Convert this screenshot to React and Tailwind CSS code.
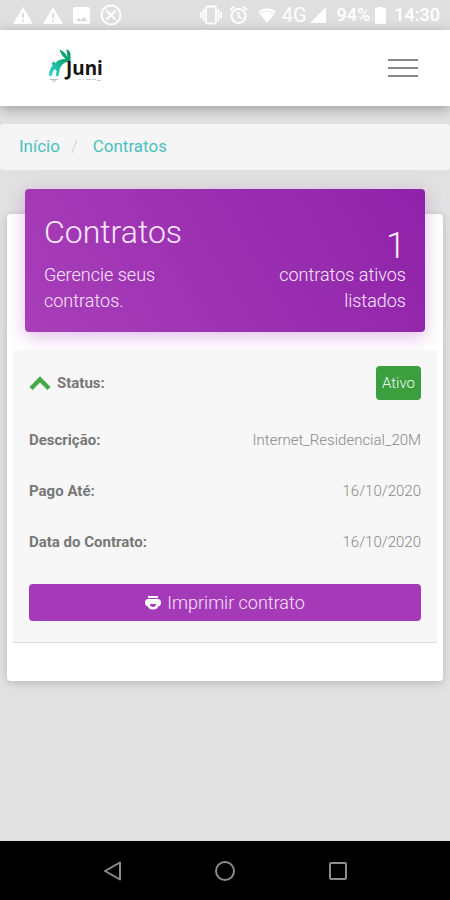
import React from "react";

function Warning() {
  return (
    <svg width="20" height="18" viewBox="0 0 20 18" aria-hidden="true">
      <path d="M10 1 L20 18 H0 Z" fill="#fff" />
      <path d="M10 7v5M10 13.5v2" stroke="#dcdcdc" strokeWidth="1.8" />
    </svg>
  );
}

function StatusBar() {
  return (
    <div className="flex h-[30px] shrink-0 items-center justify-between bg-[#dfdfdf] pr-[10px] pl-[13px] text-white">
      <div className="flex items-center gap-[10px]">
        <Warning />
        <Warning />
        <svg width="17" height="17" viewBox="0 0 17 17" aria-hidden="true">
          <rect width="17" height="17" rx="2" fill="#fff" />
          <path d="M3 14l3-3 2 2 3-3 3 4z" fill="#d6d6d6" />
        </svg>
        <svg width="22" height="22" viewBox="0 0 22 22" fill="none" stroke="#fff" strokeWidth="2" aria-hidden="true">
          <circle cx="11" cy="11" r="9.5" />
          <path d="M6.500 6.500l9 9M15.500 6.500l-9 9" />
        </svg>
      </div>
      <div className="flex items-center text-[18px] leading-none font-medium">
        <svg className="mr-[7px]" width="22" height="20" viewBox="0 0 22 20" fill="none" stroke="#fff" strokeWidth="1.800" aria-hidden="true">
          <rect x="6" y="1.500" width="10" height="17" rx="1.500" />
          <path d="M3.500 4v12M18.500 4v12M1 7v6M21 7v6" />
        </svg>
        <svg className="mr-[10px]" width="19" height="20" viewBox="0 0 19 20" fill="none" stroke="#fff" strokeWidth="2" aria-hidden="true">
          <circle cx="9.500" cy="11" r="7" />
          <path d="M9.500 7v4.500l3 2M1 5l4-3.500M18 5l-4-3.500" />
        </svg>
        <svg className="mr-[6px]" width="18" height="15" viewBox="0 0 18 15" aria-hidden="true">
          <path d="M0 3.500Q9-3 18 3.500L9 15z" fill="#fff" />
          <path d="M1.500 5.500Q9 1 16.500 5.500" stroke="#e6e6e6" fill="none" />
        </svg>
        <span className="text-[20px] font-normal">4G</span>
        <svg className="mr-[11px] ml-[3px]" width="16" height="16" viewBox="0 0 16 16" aria-hidden="true">
          <path d="M0 16L16 0v16z" fill="#fff" />
        </svg>
        <span>94%</span>
        <svg className="mr-[8px] ml-[5px]" width="11" height="17" viewBox="0 0 11 17" aria-hidden="true">
          <path d="M3 0h5v1h3v16H0V1h3z" fill="#fff" />
        </svg>
        <span>14:30</span>
      </div>
    </div>
  );
}

function Logo() {
  return (
    <svg width="56" height="36" viewBox="0 0 56 36" role="img" aria-label="Juni">
      <defs>
        <linearGradient id="juniLeaf" x1="1" y1="0" x2="0" y2="1">
          <stop offset="0" stopColor="#05944f" />
          <stop offset="0.500" stopColor="#17b08c" />
          <stop offset="1" stopColor="#35dcd0" />
        </linearGradient>
      </defs>
      <g fill="url(#juniLeaf)">
        <path d="M11.500 1.500Q17 3.500 19.500 9L18.500 1Q22 2.500 22.500 6V13Q20 14 17 14.500Q13 17 12 20L10.500 28H8L8.500 22.500Q7 20.500 5.500 22.500L3.500 28H1Q0.500 22 4.500 17.500Q3 14 5.500 13.500L7.500 15Q11 10.500 17.500 11Q13 7 11.500 1.500Z" />
      </g>
      <text x="18" y="27" fontSize="19" fontWeight="700" fill="#151515" fontFamily="Noto Sans, Open Sans, sans-serif">
        Juni
      </text>
      <path d="M2 31.500h8M4 33h4" stroke="#bbb" />
      <path d="M31 31.500h2M35 31.500h1M38 31.500h5M44 31.500h4M49 32.500h4" stroke="#ccc" />
    </svg>
  );
}

function Header() {
  return (
    <header className="z-10 flex h-[76px] shrink-0 items-center justify-between bg-white pr-8 pl-12 shadow-[0_3px_12px_rgba(0,0,0,0.3)]">
      <a href="#inicio" className="-mt-1">
        <Logo />
      </a>
      <button type="button" aria-label="Menu" className="flex w-[30px] flex-col gap-[6px]">
        <span className="h-[2px] w-full bg-[#888]" />
        <span className="h-[2px] w-full bg-[#888]" />
        <span className="h-[2px] w-full bg-[#888]" />
      </button>
    </header>
  );
}

function Row({ label, value }) {
  return (
    <div className="flex items-center justify-between">
      <dt className="font-bold text-[#777]">{label}</dt>
      <dd className="font-light text-[#888]">{value}</dd>
    </div>
  );
}

function ContractCard() {
  return (
    <main className="mx-[7px] mt-[44px] rounded-[4px] bg-white px-[6px] pb-[38px] shadow-[0_2px_8px_rgba(0,0,0,0.18)]">
      <section className="relative mx-3 -mt-[25px] flex h-[143px] justify-between rounded-[4px] bg-linear-60 from-[#a83eb8] to-[#8e22a9] px-[19px] text-[18px] leading-[26px] font-light text-[#f9e8fc] shadow-[0_5px_18px_rgba(156,39,176,0.3)]">
        <div className="w-[150px] pt-6">
          <h1 className="text-[32px] leading-[38px]">Contratos</h1>
          <p className="mt-[11px]">Gerencie seus contratos.</p>
        </div>
        <div className="w-[150px] pt-[41px] text-right">
          <p className="text-[36px] leading-[32px]">1</p>
          <p>contratos ativos listados</p>
        </div>
      </section>

      <section className="mt-[18px] border-b border-[#ddd] bg-[#f7f7f7] px-4 pt-[16px] pb-[21px] text-[15px] leading-[22px]">
        <dl className="flex flex-col gap-[29px]">
          <div className="flex items-center justify-between">
            <dt className="flex items-center gap-[6px] font-bold text-[#777]">
              <svg width="22" height="16" viewBox="0 0 22 16" aria-hidden="true">
                <path d="M2 13.500L11 4.500L20 13.500" fill="none" stroke="#48a84c" strokeWidth="4.500" />
              </svg>
              Status:
            </dt>
            <dd className="rounded-[4px] bg-[#3b9f40] px-[6px] py-[6px] font-light text-[#effbef]">Ativo</dd>
          </div>
          <Row label="Descrição:" value="Internet_Residencial_20M" />
          <Row label="Pago Até:" value="16/10/2020" />
          <Row label="Data do Contrato:" value="16/10/2020" />
        </dl>
        <button
          type="button"
          className="mt-[31px] flex h-[37px] w-full items-center justify-center gap-[6px] rounded-[4px] bg-[#a53ab8] text-[18px] font-light text-[#f9e3fc]"
        >
          <svg width="16" height="15" viewBox="0 0 16 15" aria-hidden="true">
            <path d="M3 1h10v2H3z" fill="#fff" />
            <path d="M3.500 4h9Q16 4 16 7.500Q16 11 13 11.500Q12.500 14.500 8 14.500Q3.500 14.500 3 11.500Q0 11 0 7.500Q0 4 3.500 4z" fill="#fff" />
            <path d="M5 9h6q0 3-3 3t-3-3z" fill="#a53ab8" />
          </svg>
          Imprimir contrato
        </button>
      </section>
    </main>
  );
}

function NavigationBar() {
  return (
    <nav className="mt-auto flex h-[59px] shrink-0 items-center justify-center gap-[92px] bg-black">
      <button type="button" aria-label="Voltar">
        <svg width="20" height="22" viewBox="0 0 20 22" fill="none" stroke="#8c8c8c" strokeWidth="2" aria-hidden="true">
          <path d="M18 2.500v17L3 11z" strokeLinejoin="round" />
        </svg>
      </button>
      <button type="button" aria-label="Tela inicial">
        <svg width="22" height="22" viewBox="0 0 22 22" fill="none" stroke="#8c8c8c" strokeWidth="2" aria-hidden="true">
          <circle cx="11" cy="11" r="9" />
        </svg>
      </button>
      <button type="button" aria-label="Recentes">
        <svg width="20" height="22" viewBox="0 0 20 22" fill="none" stroke="#8c8c8c" strokeWidth="2" aria-hidden="true">
          <rect x="2" y="3" width="16" height="16" rx="1" />
        </svg>
      </button>
    </nav>
  );
}

export default function App() {
  return (
    <div className="flex min-h-screen flex-col bg-[#e1e1e1] font-[Roboto,sans-serif]">
      <StatusBar />
      <Header />
      <nav aria-label="Navegação" className="mt-[18px] flex h-[46px] shrink-0 items-center rounded-[4px] bg-[#f5f5f5] px-[19px] text-[17px] text-[#4bc1bd]">
        <a href="#inicio">Início</a>
        <span className="mr-[15px] ml-[11px] font-light text-[#ccc]">/</span>
        <a href="#contratos">Contratos</a>
      </nav>
      <ContractCard />
      <NavigationBar />
    </div>
  );
}
